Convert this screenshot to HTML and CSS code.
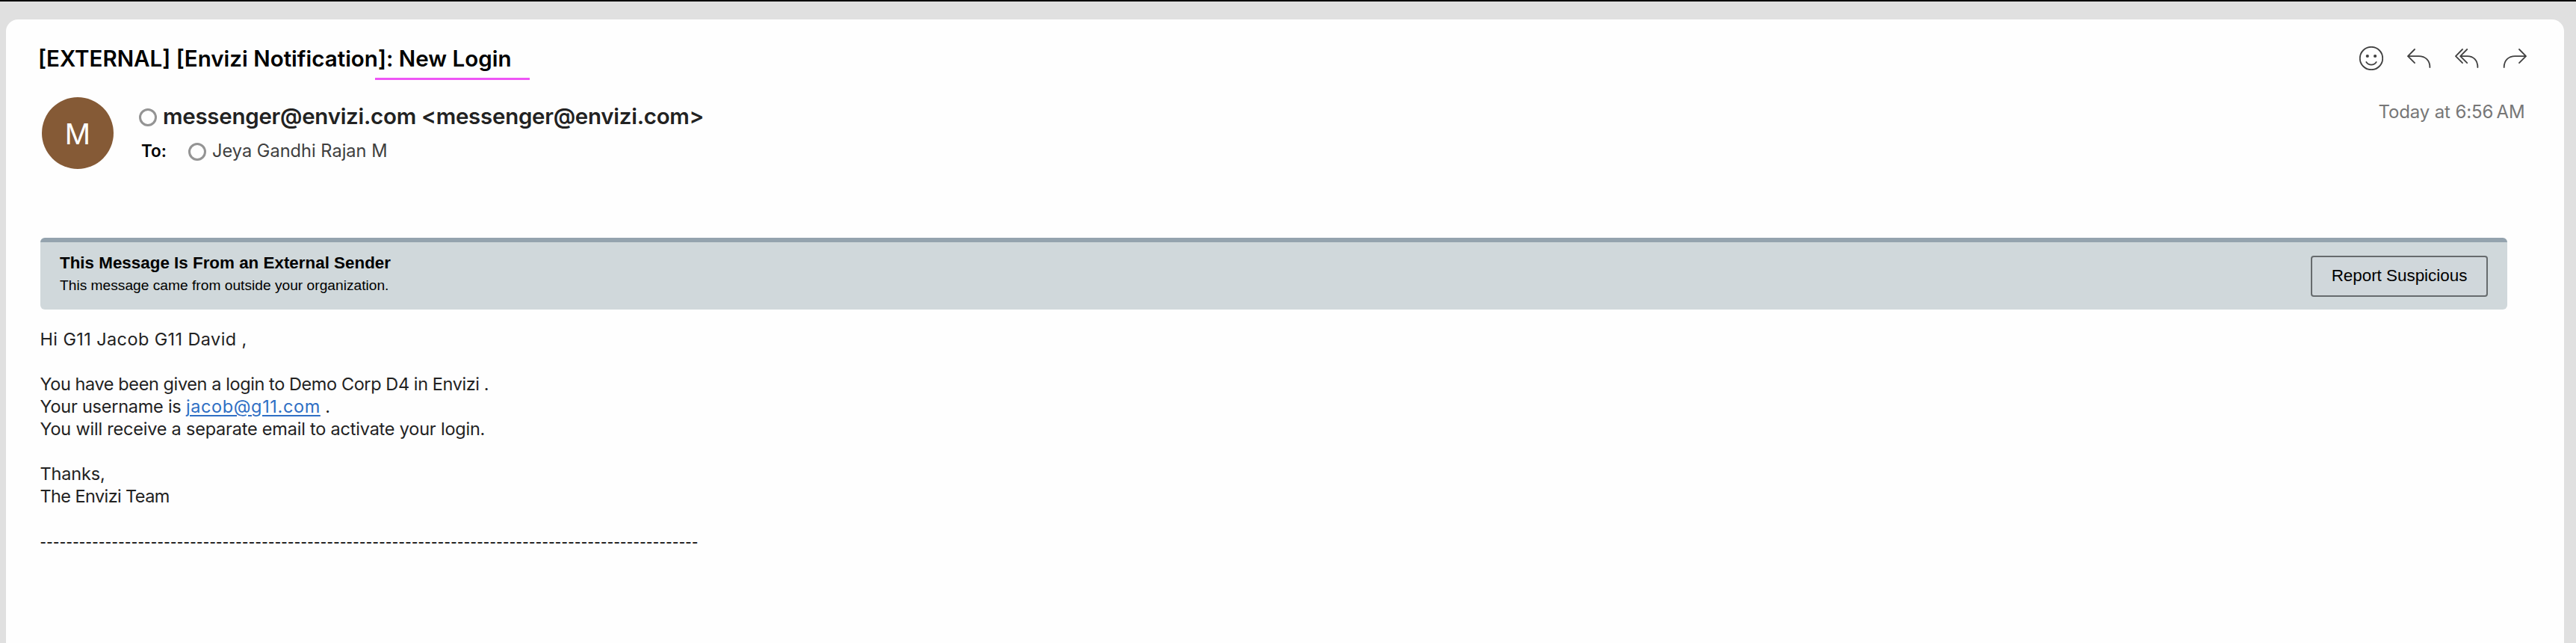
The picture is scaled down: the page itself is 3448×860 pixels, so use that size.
FILE: index.html
```
<!DOCTYPE html>
<html lang="en">
<head>
<meta charset="utf-8">
<title>[EXTERNAL] [Envizi Notification]: New Login</title>
<link rel="stylesheet" href="styles.css">
</head>
<body>
<main class="card">
  <header class="subject-row">
    <h1 class="subject">[EXTERNAL] [Envizi Notification]: New Login<span class="marker"></span></h1>
    <nav class="actions">
      <svg class="icon" viewBox="0 0 32 32"><circle cx="16" cy="16" r="15.2"/><circle class="eye" cx="10.8" cy="13" r="2.1"/><circle class="eye" cx="21.1" cy="13" r="2.1"/><path d="M9.3 20.9C12.6 25.8 19.4 25.8 22.7 20.9"/></svg>
      <svg class="icon" viewBox="0 0 32 32"><path d="M10 4L1 13.2L10 22.2M1 13.2H15.5C24.5 13.2 30.4 19 30.4 28"/></svg>
      <svg class="icon" viewBox="0 0 32 32"><path d="M10 4L1 13.2L10 22.2M16.2 4L7.2 13.2L16.2 22.2M7.2 13.2H16.5C25 13.2 30.4 19 30.4 28"/></svg>
      <svg class="icon" viewBox="0 0 32 32"><path d="M22 4L31 13.2L22 22.2M31 13.2H16.5C7.5 13.2 1.7 19 1.7 28"/></svg>
    </nav>
  </header>

  <section class="sender-row">
    <div class="avatar">M</div>
    <div class="people">
      <div class="from"><span class="ring"></span><span class="from-name">messenger@envizi.com &lt;messenger@envizi.com&gt;</span></div>
      <div class="to"><span class="to-label">To:</span><span class="ring"></span><span class="to-name">Jeya Gandhi Rajan M</span></div>
    </div>
    <time class="date">Today at 6:56&#8201;AM</time>
  </section>

  <section class="banner">
    <div>
      <div class="banner-title">This Message Is From an External Sender</div>
      <div class="banner-text">This message came from outside your organization.</div>
    </div>
    <button class="report">Report Suspicious</button>
  </section>

  <article class="message">
    <p class="greeting">Hi G11 Jacob G11 David ,</p>
    <p><span class="login">You have been given a login to Demo Corp D4 in Envizi .</span><br>
    <span class="user">Your username is <a class="mail" href="#">jacob@g11.com</a> .</span><br>
    <span class="activate">You will receive a separate email to activate your login.</span></p>
    <p><span class="thanks">Thanks,</span><br>
    <span class="team">The Envizi Team</span></p>
    <p class="rule">-----------------------------------------------------------------------------------------------------</p>
  </article>
</main>
</body>
</html>
```
FILE: styles.css
```
* { box-sizing: border-box; }

body {
  margin: 0;
  height: 860px;
  padding: 24px 16px 0 8px;
  border-top: 2px solid #000;
  background: #e0e0e0;
  font-family: Inter, "Liberation Sans", sans-serif;
  overflow: hidden;
}

.card {
  height: 834px;
  padding-top: 34px;
  border-radius: 16px 16px 0 0;
  background: #fefefe;
}

.subject-row {
  display: flex;
  justify-content: space-between;
  align-items: center;
  height: 36px;
  padding: 0 50px 0 43px;
}

.subject {
  position: relative;
  margin: 0;
  font-size: 29.55px;
  line-height: 36px;
  font-weight: 600;
  color: #000;
  white-space: nowrap;
}

/* hand-drawn highlight under the end of the subject */
.marker {
  position: absolute;
  right: -24px;
  bottom: -11px;
  width: 207px;
  height: 3px;
  background: #ee55f5;
}

.actions { display: flex; gap: 32px; }

.icon {
  display: block;
  width: 32px;
  height: 32px;
  fill: none;
  stroke: #404040;
  stroke-width: 1.8;
  stroke-linecap: round;
  stroke-linejoin: round;
}

.icon .eye { fill: #404040; stroke: none; }

.sender-row {
  display: flex;
  height: 222px;
  padding: 34px 52.5px 0 48px;
}

.avatar {
  width: 96px;
  height: 96px;
  border-radius: 50%;
  background: #855a36;
  color: #fff;
  font-size: 38px;
  line-height: 99px;
  text-align: center;
}

.people { flex: 1; padding: 7px 0 0 34px; }

.from, .to { display: flex; align-items: center; white-space: nowrap; }

.ring {
  width: 24px;
  height: 24px;
  border: 3px solid #949494;
  border-radius: 50%;
}

.from { height: 36px; }
.from .ring { margin: 4px 8px 0 0; }

.from-name {
  font-size: 29.5px;
  line-height: 36px;
  font-weight: 600;
  letter-spacing: -0.28px;
  color: #222;
}

.to { height: 30px; margin-top: 14px; padding-left: 3px; line-height: 30px; }
.to .ring { margin: 2px 8px 0 0; }
.to-label { width: 63px; font-size: 22.5px; font-weight: 600; color: #000; }
.to-name { font-size: 23.6px; color: #404040; }

.date {
  padding-top: 5px;
  font-size: 24px;
  line-height: 30px;
  letter-spacing: -0.12px;
  color: #777;
}

.banner {
  display: flex;
  justify-content: space-between;
  height: 96px;
  margin: 0 76px 0 46px;
  padding: 14px 26px 0;
  border-top: 6px solid #94a3ae;
  border-radius: 6px;
  background: #d0d8db;
  font-family: "Liberation Sans", Arial, sans-serif;
  color: #000;
}

.banner-title { font-size: 22.4px; line-height: 28px; font-weight: 700; }
.banner-text { margin-top: 3px; font-size: 19.2px; line-height: 26px; }

.report {
  width: 237px;
  height: 55px;
  margin-top: 4px;
  padding: 0 0 1px;
  border: 2px solid #666b6d;
  border-radius: 4px;
  background: #d0d7db;
  font: 22.4px "Liberation Sans", Arial, sans-serif;
  color: #000;
}

.message {
  padding: 25px 46px 0 45.5px;
  font-size: 23.5px;
  line-height: 30px;
  color: #222;
}

.message p { margin: 0 0 30px; white-space: nowrap; }

.greeting { letter-spacing: 0.385px; }
.login { letter-spacing: -0.41px; }
.user { letter-spacing: -0.24px; }
.activate { letter-spacing: -0.21px; }
.thanks { letter-spacing: -0.17px; }
.team { letter-spacing: -0.6px; }

.mail {
  color: #2f6fc4;
  letter-spacing: 0.62px;
  text-decoration-thickness: 2px;
  text-underline-offset: 3px;
}

.message .rule {
  font-size: 18px;
  font-weight: 600;
  line-height: 32px;
  letter-spacing: 0.35px;
}
```
